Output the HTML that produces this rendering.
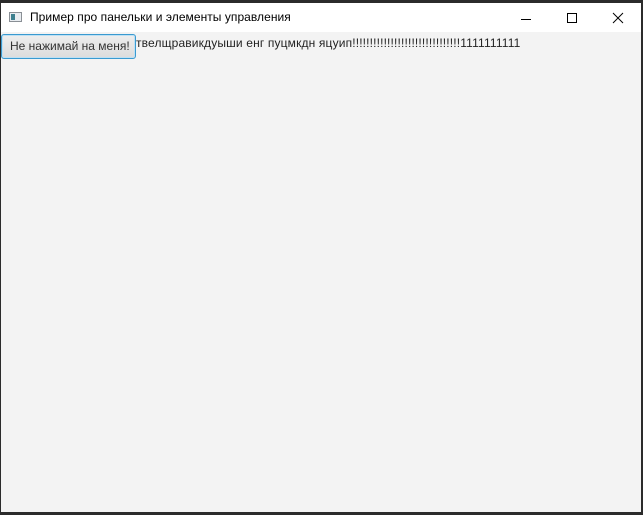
<!DOCTYPE html>
<html><head><meta charset="utf-8"><style>
html,body{margin:0;padding:0;width:643px;height:515px;background:#2b2b2b;overflow:hidden;position:relative;font-family:"Segoe UI","Liberation Sans","DejaVu Sans",sans-serif;}
#win{position:absolute;left:1px;top:3px;width:640px;height:509px;background:#f3f3f3;}
#title{position:absolute;left:0;top:0;width:640px;height:29px;background:#fff;}
#title .t{position:absolute;left:29px;top:7px;font-size:12px;color:#000;letter-spacing:0.05px;}
#icon{position:absolute;left:8px;top:9px;width:13px;height:10px;border:1px solid #8a8f95;background:#e8ecf0;box-sizing:border-box;}
#icon:before{content:"";position:absolute;left:1px;top:1px;width:4px;height:6px;background:#3d7f8e;}
#lbl{position:absolute;left:135px;top:33px;font-size:12px;color:#222;white-space:nowrap;letter-spacing:0.15px;}
#btn{position:absolute;left:0;top:31px;width:135px;height:25px;box-sizing:border-box;border:1px solid #3a9ad0;border-radius:3px;background:linear-gradient(#eeeeee,#dcdcdc);font-size:12px;color:#333;line-height:22px;padding-left:8px;box-shadow:inset 0 0 0 1px #bfe0f3;}
</style></head><body>
<div id="win">
<div id="title"><div id="icon"></div><div class="t">Пример про панельки и элементы управления</div>
<svg style="position:absolute;left:515px;top:8px" width="110" height="14">
<line x1="5" y1="8.5" x2="15" y2="8.5" stroke="#000" stroke-width="1"/>
<rect x="51.5" y="2.5" width="9" height="9" fill="none" stroke="#000"/>
<line x1="97" y1="2" x2="107" y2="12" stroke="#000"/><line x1="107" y1="2" x2="97" y2="12" stroke="#000"/>
</svg></div>
<div id="lbl">твелщравикдуыши енг пуцмкдн яцуип!!!!!!!!!!!!!!!!!!!!!!!!!!!!!!!1111111111</div>
<div id="btn">Не нажимай на меня!</div>
</div>
</body></html>
